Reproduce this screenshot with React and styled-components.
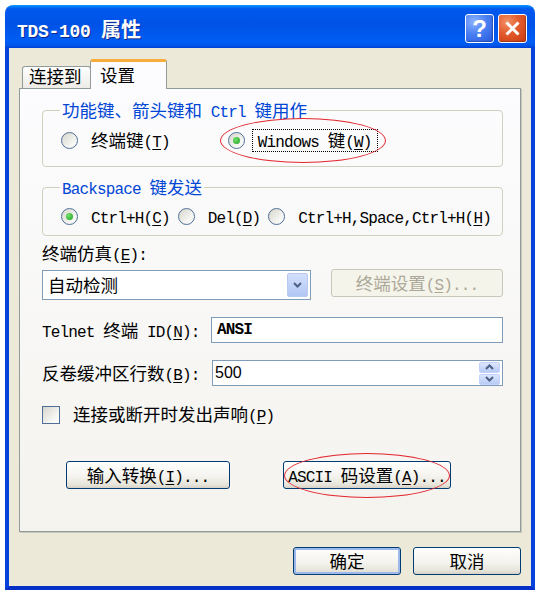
import React from 'react';
import styled, { createGlobalStyle } from 'styled-components';

const CJK = `"Noto Sans CJK SC", "Liberation Sans", sans-serif`;

const GlobalStyle = createGlobalStyle`
  html, body {
    margin: 0;
    padding: 0;
    background: #ffffff;
  }
  body {
    font-family: ${CJK};
    font-size: 17.5px;
    line-height: 20px;
    color: #000;
  }
`;

// half-width latin face, like the SimSun ascii glyphs
const Mono = styled.span`
  font-family: "Liberation Mono", monospace;
  font-size: 16px;
  line-height: 1;
  letter-spacing: -0.85px;
  font-weight: ${(p) => (p.$bold ? 700 : 400)};
`;

const Key = styled.span`
  text-decoration: underline;
  text-underline-offset: 2px;
`;

// "&" marks the accelerator letter, ascii runs get the mono face
function Txt({ s, bold }) {
  const out = [];
  let run = '';
  let ascii = null;
  const flush = () => {
    if (!run) return;
    out.push(
      ascii ? (
        <Mono key={out.length} $bold={bold}>
          {run}
        </Mono>
      ) : (
        <span key={out.length}>{run}</span>
      )
    );
    run = '';
  };
  for (let i = 0; i < s.length; i++) {
    const c = s[i];
    if (c === '&') {
      flush();
      out.push(
        <Mono key={out.length} $bold={bold}>
          <Key>{s[i + 1]}</Key>
        </Mono>
      );
      i++;
      ascii = null;
      continue;
    }
    const isAscii = c.charCodeAt(0) < 128;
    if (ascii !== null && isAscii !== ascii) flush();
    ascii = isAscii;
    run += c;
  }
  flush();
  return <span>{out}</span>;
}

/* ---------- window chrome ---------- */

const Window = styled.div`
  margin: 5px 0 0 5px;
  width: 530px;
  display: flex;
  flex-direction: column;
`;

const TitleBar = styled.div`
  height: 43px;
  box-sizing: border-box;
  border-radius: 8px 8px 0 0;
  background: linear-gradient(
    180deg,
    #0a98ff 0%,
    #0058ee 9%,
    #0052e6 45%,
    #005ef4 85%,
    #0056ea 94%,
    #003fd6 100%
  );
  display: flex;
  align-items: flex-start;
  padding: 0 8px 0 12px;
`;

const Title = styled.div`
  flex: 1;
  margin-top: 12px;
  color: #fff;
  font-weight: 700;
  font-size: 20px;
  line-height: 24px;
  text-shadow: 1px 1px 0 #0c2a8e;

  ${Mono} {
    font-size: 18px;
    letter-spacing: -0.3px;
  }
`;

const CaptionButtons = styled.div`
  display: flex;
  gap: 4px;
  margin-top: 9px;
`;

const CaptionButton = styled.div`
  width: 29px;
  height: 29px;
  box-sizing: border-box;
  border: 1px solid #fff;
  border-radius: 3px;
  display: flex;
  align-items: center;
  justify-content: center;
  background: ${(p) =>
    p.$close
      ? 'radial-gradient(circle at 30% 25%, #f29066 0%, #e25a2b 45%, #c63a10 100%)'
      : 'radial-gradient(circle at 30% 25%, #8fb3ff 0%, #4a80f2 45%, #2458de 100%)'};
  box-shadow: inset -1px -1px 1px rgba(0, 0, 0, 0.25);
  color: #fff;
  font-family: "Liberation Sans", sans-serif;
  font-weight: 700;
  font-size: 24px;
  line-height: 24px;
`;

const Frame = styled.div`
  border: 4px solid #0842dc;
  border-top: 0;
  border-bottom-color: #0530c8;
  background: #ece9d8;
  padding: 11px 10px;
  display: flex;
  flex-direction: column;
`;

/* ---------- tabs ---------- */

const TabStrip = styled.div`
  display: flex;
  align-items: flex-end;
  height: 29px;
  padding-left: 3px;
`;

const Tab = styled.div`
  box-sizing: border-box;
  width: ${(p) => p.$w}px;
  height: ${(p) => (p.$active ? 30 : 22)}px;
  margin-bottom: ${(p) => (p.$active ? -1 : 0)}px;
  margin-left: ${(p) => (p.$active ? -1 : 0)}px;
  position: relative;
  z-index: ${(p) => (p.$active ? 1 : 0)};
  border: 1px solid #919b9c;
  border-bottom: 0;
  border-top: ${(p) => (p.$active ? '3px solid #f6ad3c' : '1px solid #919b9c')};
  border-radius: 3px 3px 0 0;
  background: ${(p) => (p.$active ? '#fcfcfe' : 'linear-gradient(#ffffff, #ecebe6)')};
  padding-left: ${(p) => (p.$active ? 9 : 6)}px;
  padding-bottom: ${(p) => (p.$active ? 2 : 3)}px;
  display: flex;
  align-items: center;
`;

const Panel = styled.div`
  box-sizing: border-box;
  height: 444px;
  border: 1px solid #919b9c;
  background: linear-gradient(#fcfcfe, #f4f3ee);
  box-shadow: 1px 1px 0 #c9c7bb;
  padding: 11px 17px 0 22px;
  display: flex;
  flex-direction: column;
`;

/* ---------- group boxes & options ---------- */

const Group = styled.fieldset`
  margin: ${(p) => p.$mt}px 0 0;
  min-width: 0;
  border: 1px solid #d0d0bf;
  border-radius: 4px;
  padding: ${(p) => p.$pt}px 0 ${(p) => p.$pb}px 18px;
`;

const Legend = styled.legend`
  padding: 0 2px;
  margin-left: -1px;
  color: #0046d5;
  line-height: 20px;
`;

const OptionRow = styled.div`
  display: flex;
  align-items: center;
  height: 22px;
  gap: ${(p) => p.$gap}px;
`;

const Option = styled.div`
  position: relative;
  display: flex;
  align-items: center;
  gap: 7px;
`;

const Radio = styled.span`
  flex: none;
  width: 17px;
  height: 17px;
  box-sizing: border-box;
  border-radius: 50%;
  border: 1px solid #4f6f98;
  background: linear-gradient(135deg, #d6d5cc 0%, #f2f2ee 60%, #ffffff 100%);
  display: flex;
  align-items: center;
  justify-content: center;

  &::after {
    content: '';
    display: ${(p) => (p.$checked ? 'block' : 'none')};
    width: 7px;
    height: 7px;
    border-radius: 50%;
    background: radial-gradient(circle at 35% 35%, #6ee06a, #21a121);
  }
`;

const OptionText = styled.span`
  padding: 0 5px;
  border: 1px dotted ${(p) => (p.$focus ? '#000' : 'transparent')};
  line-height: 19px;
  white-space: nowrap;
`;

const Ring = styled.span`
  position: absolute;
  inset: ${(p) => p.$inset};
  border: 1.5px solid #e3262d;
  border-radius: 50%;
  pointer-events: none;
`;

/* ---------- fields ---------- */

const FieldLabel = styled.div`
  margin-top: ${(p) => p.$mt || 0}px;
  width: ${(p) => (p.$w ? `${p.$w}px` : 'auto')};
  flex: none;
  white-space: nowrap;
`;

const Row = styled.div`
  display: flex;
  align-items: ${(p) => p.$align || 'center'};
  justify-content: ${(p) => p.$justify || 'flex-start'};
  margin-top: ${(p) => p.$mt}px;
  padding-left: ${(p) => p.$pl || 0}px;
  gap: ${(p) => p.$gap || 0}px;
`;

const Combo = styled.div`
  box-sizing: border-box;
  width: 269px;
  height: 30px;
  margin-top: 1px;
  border: 1px solid #7f9db9;
  background: #fff;
  display: flex;
  align-items: center;
  padding-left: 5px;
`;

const ComboValue = styled.span`
  flex: 1;
`;

const DropButton = styled.span`
  width: 21px;
  height: 24px;
  margin-right: 2px;
  box-sizing: border-box;
  border: 1px solid #b9c9ef;
  border-radius: 2px;
  background: linear-gradient(#d3e0fd, #b3c7f5);
  display: flex;
  align-items: center;
  justify-content: center;
`;

const Input = styled.div`
  flex: 1;
  box-sizing: border-box;
  height: 26px;
  border: 1px solid #7f9db9;
  background: #fff;
  display: flex;
  align-items: center;
  padding-left: ${(p) => p.$pl}px;
`;

const Digits = styled.span`
  flex: 1;
  font-family: "Liberation Sans", sans-serif;
  font-size: 16px;
`;

const Spin = styled.div`
  display: flex;
  flex-direction: column;
  gap: 1px;
  margin-right: 2px;
`;

const SpinHalf = styled.span`
  width: 21px;
  height: 11px;
  box-sizing: border-box;
  border: 1px solid #c3d3fd;
  border-radius: 2px;
  background: linear-gradient(#dbe6fd, #b8cbf5);
  display: flex;
  align-items: center;
  justify-content: center;
`;

const Check = styled.span`
  flex: none;
  width: 18px;
  height: 18px;
  box-sizing: border-box;
  border: 1px solid #4f6f98;
  background: linear-gradient(135deg, #d6d5cc 0%, #f2f2ee 60%, #ffffff 100%);
`;

const Button = styled.div`
  position: relative;
  flex: none;
  box-sizing: border-box;
  width: ${(p) => p.$w}px;
  height: 28px;
  border: 1px solid ${(p) => (p.$disabled ? '#c9c7ba' : '#003c74')};
  border-radius: 3px;
  background: ${(p) =>
    p.$disabled
      ? '#f5f4ea'
      : 'linear-gradient(180deg, #ffffff 0%, #f4f3ee 55%, #e6e4da 88%, #d6d0c5 100%)'};
  box-shadow: ${(p) => (p.$default ? 'inset 0 0 0 2px #9db9eb' : 'none')};
  color: ${(p) => (p.$disabled ? '#aca899' : '#000')};
  display: flex;
  align-items: center;
  justify-content: center;
  white-space: nowrap;
`;

const Actions = styled.div`
  display: flex;
  justify-content: flex-end;
  gap: 12px;
  margin-top: 15px;
`;

function Chevron({ up }) {
  return (
    <svg width="9" height="6" viewBox="0 0 9 6">
      <path
        d={up ? 'M1 5L4.5 1.5L8 5' : 'M1 1L4.5 4.5L8 1'}
        fill="none"
        stroke="#4d6185"
        strokeWidth="2"
      />
    </svg>
  );
}

export default function App() {
  return (
    <>
      <GlobalStyle />
      <Window>
        <TitleBar>
          <Title>
            <Txt s="TDS-100 属性" bold />
          </Title>
          <CaptionButtons>
            <CaptionButton>?</CaptionButton>
            <CaptionButton $close>
              <svg width="17" height="17" viewBox="0 0 17 17">
                <path d="M2.5 2.5L14.5 14.5M14.5 2.5L2.5 14.5" stroke="#fff" strokeWidth="3" />
              </svg>
            </CaptionButton>
          </CaptionButtons>
        </TitleBar>

        <Frame>
          <TabStrip>
            <Tab $w={69}>连接到</Tab>
            <Tab $w={77} $active>
              设置
            </Tab>
          </TabStrip>

          <Panel>
            <Group $mt={0} $pt={8} $pb={15}>
              <Legend>
                <Txt s="功能键、箭头键和 Ctrl 键用作" />
              </Legend>
              <OptionRow $gap={52}>
                <Option>
                  <Radio />
                  <OptionText>
                    <Txt s="终端键(&T)" />
                  </OptionText>
                </Option>
                <Option>
                  <Radio $checked />
                  <OptionText $focus>
                    <Txt s="Windows 键(&W)" />
                  </OptionText>
                  <Ring $inset="-11px -8px -11px -8px" />
                </Option>
              </OptionRow>
            </Group>

            <Group $mt={10} $pt={7} $pb={8}>
              <Legend>
                <Txt s="Backspace 键发送" />
              </Legend>
              <OptionRow $gap={2}>
                <Option>
                  <Radio $checked />
                  <OptionText>
                    <Txt s="Ctrl+H(&C)" />
                  </OptionText>
                </Option>
                <Option>
                  <Radio />
                  <OptionText>
                    <Txt s="Del(&D)" />
                  </OptionText>
                </Option>
                <Option>
                  <Radio />
                  <OptionText>
                    <Txt s="Ctrl+H,Space,Ctrl+H(&H)" />
                  </OptionText>
                </Option>
              </OptionRow>
            </Group>

            <FieldLabel $mt={7}>
              <Txt s="终端仿真(&E):" />
            </FieldLabel>
            <Row $mt={5} $align="flex-start" $justify="space-between">
              <Combo>
                <ComboValue>自动检测</ComboValue>
                <DropButton>
                  <Chevron />
                </DropButton>
              </Combo>
              <Button $w={172} $disabled>
                <Txt s="终端设置(&S)..." />
              </Button>
            </Row>

            <Row $mt={17}>
              <FieldLabel $w={169}>
                <Txt s="Telnet 终端 ID(&N):" />
              </FieldLabel>
              <Input $pl={5}>
                <Mono $bold>ANSI</Mono>
              </Input>
            </Row>

            <Row $mt={17}>
              <FieldLabel $w={170}>
                <Txt s="反卷缓冲区行数(&B):" />
              </FieldLabel>
              <Input $pl={2}>
                <Digits>500</Digits>
                <Spin>
                  <SpinHalf>
                    <Chevron up />
                  </SpinHalf>
                  <SpinHalf>
                    <Chevron />
                  </SpinHalf>
                </Spin>
              </Input>
            </Row>

            <Row $mt={18} $gap={13}>
              <Check />
              <FieldLabel>
                <Txt s="连接或断开时发出声响(&P)" />
              </FieldLabel>
            </Row>

            <Row $mt={36} $pl={24} $gap={53}>
              <Button $w={164}>
                <Txt s="输入转换(&I)..." />
              </Button>
              <Button $w={168}>
                <Txt s="ASCII 码设置(&A)..." />
                <Ring $inset="-9px 0 -10px 0" />
              </Button>
            </Row>
          </Panel>

          <Actions>
            <Button $w={108} $default>
              确定
            </Button>
            <Button $w={108}>取消</Button>
          </Actions>
        </Frame>
      </Window>
    </>
  );
}
